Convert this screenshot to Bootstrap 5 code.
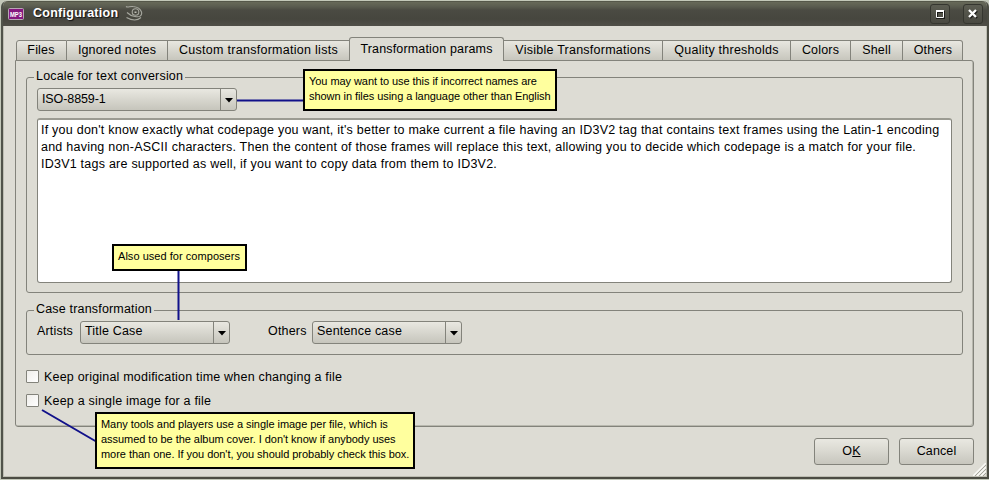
<!DOCTYPE html>
<html lang="en">
<head>
<meta charset="utf-8">
<title>Configuration</title>
<link rel="stylesheet" href="https://cdn.jsdelivr.net/npm/bootstrap@5.3.0/dist/css/bootstrap.min.css">
<style>
:root{--face:#dddcd4;--edge:#83837b;--ink:#000}
body{width:989px;height:480px;overflow:hidden;background:#c3c8b9;color:var(--ink);font:12.5px/15px "Liberation Sans",Arial,sans-serif;letter-spacing:.18px}
.window{width:988px;height:478px;border:2px solid #4b4c43;border-left-color:#50534a;border-top:0;border-radius:6px 6px 0 0;background:var(--face);margin-top:1px}
.titlebar{height:25px;background:linear-gradient(#43453a 0,#676959 1px,#5c5e51 5px,#4b4b43 9px,#46463e 18px,#504f48 25px);border-radius:5px 5px 0 0;padding:0 4px 0 5px}
.title-text{color:#fff;font-weight:bold;font-size:12.5px;letter-spacing:.26px;margin-left:9px;margin-right:7px;text-shadow:1px 1px 1px #111}
.win-btn{width:20px;height:20px;border:1px solid #35362f;border-radius:3px;background:linear-gradient(#5c5d52,#494941)}
.client{border:1px solid #bdbdb2;border-top:0;padding:11px 12px 0 11px}
.tabs{height:24px;padding-left:1px}
.tabs .tab{height:21px;border:1px solid var(--edge);border-left-width:0;background:linear-gradient(#e8e7e0,#d9d8d0 45%,#c7c6bd);white-space:nowrap;padding-bottom:1px}
.tabs .tab:first-child{border-left-width:1px;border-top-left-radius:3px}
.tabs .tab:last-child{border-top-right-radius:3px}
.tabs .tab.current{height:24px;background:var(--face);border-left-width:1px;border-bottom:0;border-radius:3px 3px 0 0;margin-left:-1px;letter-spacing:.16px}
.tabs .t1{width:51px;padding-right:1px}.tabs .t2{width:101px;letter-spacing:.13px}.tabs .t3{width:182px;letter-spacing:.28px}.t4{width:155px}.tabs .t5{width:159px;letter-spacing:.25px}.tabs .t6{width:128px;letter-spacing:.24px}.t7{width:60px}.t8{width:52px}.t9{width:60px}
.tabs .t9{padding-left:1px}
.panel{height:367px;border:1px solid var(--edge);margin-top:-1px;border-radius:0 3px 3px 3px;padding:16px 10px 0;box-shadow:inset -1px -1px #b8b8ae}
.group{border:1px solid var(--edge);border-radius:3px;padding:0 10px}
.group-title{display:block;width:max-content;background:var(--face);padding:0 2px;margin:-9px 0 0 -3px;height:15px}
.combo{height:23px;border:1px solid var(--edge);border-radius:3px;background:linear-gradient(#e9e8e1,#d9d8d0 45%,#c6c5bc)}
.combo .value{padding-left:4px;height:19px}
.combo .value.locale{letter-spacing:-.1px;height:21px}
.combo .arrow{width:16px;border-left:1px solid var(--edge);padding-top:1px}
.notes{height:165px;border:1px solid var(--edge);border-top:2px solid #9b9b92;border-radius:3px;background:#fff;padding:2px 3px;line-height:17px;white-space:nowrap;letter-spacing:.235px}
.check{width:13px;height:13px;border:1px solid var(--edge);border-radius:1px;background:linear-gradient(135deg,#efeeea,#fff);margin-bottom:1px}
.keep{margin-left:5px;letter-spacing:.2px}
.push{width:75px;height:27px;border:1px solid var(--edge);border-radius:3px;background:linear-gradient(#e9e8e1,#d9d8d0 50%,#c7c6bd);color:#000;font-size:12.5px;line-height:15px;letter-spacing:.13px;padding:0 0 1px}
.tip{position:absolute;border:2px solid #000;background:#ffff9e;font-size:11px;line-height:15px;letter-spacing:.04px;white-space:nowrap;padding:3px 4px}
.tip-a{left:303px;top:69px;width:254px;height:42px;letter-spacing:-.06px}
.tip-b{left:112px;top:244px;width:135px;height:27px}
.tip-c{left:95px;top:412px;width:320px;height:57px;letter-spacing:-.04px}
.leaders{left:0;top:0}
.grip{right:3px;bottom:4px}
</style>
<script src="https://cdn.jsdelivr.net/npm/bootstrap@5.3.0/dist/js/bootstrap.bundle.min.js"></script>
</head>
<body class="position-relative">
<main class="window ms-auto d-flex flex-column">
  <header class="titlebar d-flex align-items-center flex-shrink-0">
    <svg width="16" height="12" viewBox="0 0 16 12"><rect x=".5" y=".5" width="15" height="11" rx="1" fill="#851780" stroke="#b7a6b4"/><text x="2" y="9" font-size="8" font-weight="bold" letter-spacing="0" textLength="12" lengthAdjust="spacingAndGlyphs" fill="#fff">MP3</text></svg>
    <span class="title-text">Configuration</span>
    <svg width="18" height="17" viewBox="0 0 18 17" fill="none" stroke="#a6a79e" stroke-width="1.100"><path d="M1 1.500C3 3 4.500 1 8 1.500C13 2 15.500 4 16.500 7C17.500 11 14 12.500 10 11.500C6.500 11 4 9.500 2 7.500M1.500 12.500C6 15 12 16 16 12.500"/><circle cx="10.500" cy="7" r="3.300"/><path d="M9.500 6.500h2v1.500h-2z" fill="#bdbeb5" stroke="none"/></svg>
    <span class="win-btn ms-auto d-flex align-items-center justify-content-center"><svg width="10" height="10"><path d="M2 3h7v6H2z" fill="none" stroke="#1c1c19" stroke-width="2"/><path d="M1.500 1.500h7v7h-7z" fill="none" stroke="#fff"/><path d="M1 1h8v2H1z" fill="#fff"/></svg></span>
    <span class="win-btn d-flex align-items-center justify-content-center" style="margin-left:13px"><svg width="10" height="10" fill="none" stroke-width="2.300"><path d="M2 2l7 7M9 2L2 9" stroke="#1c1c19"/><path d="M1 1l7 7M8 1L1 8" stroke="#fff"/></svg></span>
  </header>
  <section class="client flex-grow-1">
    <nav class="tabs d-flex align-items-end position-relative">
      <span class="tab t1 d-flex align-items-center justify-content-center">Files</span>
      <span class="tab t2 d-flex align-items-center justify-content-center">Ignored notes</span>
      <span class="tab t3 d-flex align-items-center justify-content-center">Custom transformation lists</span>
      <span class="tab t4 current d-flex align-items-center justify-content-center">Transformation params</span>
      <span class="tab t5 d-flex align-items-center justify-content-center">Visible Transformations</span>
      <span class="tab t6 d-flex align-items-center justify-content-center">Quality thresholds</span>
      <span class="tab t7 d-flex align-items-center justify-content-center">Colors</span>
      <span class="tab t8 d-flex align-items-center justify-content-center">Shell</span>
      <span class="tab t9 d-flex align-items-center justify-content-center">Others</span>
    </nav>
    <div class="panel">
      <section class="group" style="height:216px">
        <span class="group-title">Locale for text conversion</span>
        <div class="combo d-flex" style="width:200px;margin-top:4px"><span class="value locale flex-grow-1 d-flex align-items-center">ISO-8859-1</span><span class="arrow d-flex align-items-center justify-content-center"><svg width="8" height="5"><path d="M0 0h8L4 4.500z"/></svg></span></div>
        <div class="notes" style="margin-top:7px">If you don't know exactly what codepage you want, it's better to make current a file having an ID3V2 tag that contains text frames using the Latin-1 encoding<br>and having non-ASCII characters. Then the content of those frames will replace this text, allowing you to decide which codepage is a match for your file.<br>ID3V1 tags are supported as well, if you want to copy data from them to ID3V2.</div>
      </section>
      <section class="group" style="height:45px;margin-top:17px">
        <span class="group-title">Case transformation</span>
        <div class="d-flex align-items-start" style="margin-top:4px">
          <label style="width:43px;padding-top:3px">Artists</label>
          <div class="combo d-flex" style="width:150px"><span class="value flex-grow-1 d-flex align-items-center">Title Case</span><span class="arrow d-flex align-items-center justify-content-center"><svg width="8" height="5"><path d="M0 0h8L4 4.500z"/></svg></span></div>
          <label style="width:44px;margin-left:38px;padding-top:3px">Others</label>
          <div class="combo d-flex" style="width:150px"><span class="value flex-grow-1 d-flex align-items-center">Sentence case</span><span class="arrow d-flex align-items-center justify-content-center"><svg width="8" height="5"><path d="M0 0h8L4 4.500z"/></svg></span></div>
        </div>
      </section>
      <div class="d-flex align-items-center" style="margin-top:14px;height:16px"><span class="check"></span><span class="keep">Keep original modification time when changing a file</span></div>
      <div class="d-flex align-items-center" style="margin-top:8px;height:16px"><span class="check"></span><span class="keep">Keep a single image for a file</span></div>
    </div>
    <footer class="d-flex justify-content-end" style="gap:10px;margin-top:11px">
      <button class="btn push">O<u>K</u></button>
      <button class="btn push">Cancel</button>
    </footer>
  </section>
</main>
<svg class="leaders position-absolute" width="989" height="480" fill="none" stroke="#11118a" stroke-width="2"><path d="M237 100.500H303M178.500 270V320M42 410L97 442"/></svg>
<svg class="grip position-absolute" width="13" height="13" fill="none" stroke="#fafaf6" stroke-width="1.500"><path d="M0 13L13 0M4 13L13 4M8 13L13 8"/><path d="M2 13L13 2M6 13L13 6M10 13L13 10" stroke="#a5a59c" stroke-width="1"/></svg>
<div class="tip tip-a">You may want to use this if incorrect names are<br>shown in files using a language other than English</div>
<div class="tip tip-b">Also used for composers</div>
<div class="tip tip-c">Many tools and players use a single image per file, which is<br>assumed to be the album cover. I don't know if anybody uses<br>more than one. If you don't, you should probably check this box.</div>
</body>
</html>
